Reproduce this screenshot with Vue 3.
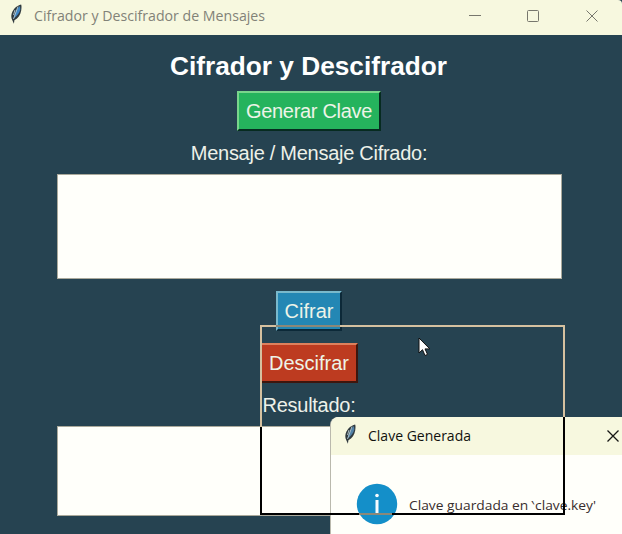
<script setup>
const feather = {
  body: 'M12.6 .6C8.500 1.500 4.800 5 3.200 9.500C2.500 11.700 2.700 14 3.700 16L5.400 19.800L5.900 16.200C9.800 14.400 12 10.500 12.700 6.500C13.100 4 13.200 1.500 12.600 .6Z',
  light: 'M11.500 2C8 4.500 6 9 5.100 14.500C8.800 12 11 8.500 11.800 5.400Z',
}
</script>

<template>
  <div class="desktop">
    <header class="titlebar">
      <svg class="feather" viewBox="0 0 16 21">
        <path :d="feather.body" fill="#303a3e" /><path :d="feather.light" fill="#4087c6" />
        <path d="M9.500 2.500L5 15M6.500 6L5 11" stroke="#b5c7cd" stroke-width=".9" fill="none" />
      </svg>
      <span class="window-title"><svg class="title-text" width="233" height="24"><text x="0" y="17" textLength="231" lengthAdjust="spacingAndGlyphs">Cifrador y Descifrador de Mensajes</text></svg></span>
      <svg class="controls" width="132" height="24" viewBox="0 0 132 24">
        <path d="M1 11.500H13M118.500 6.500L129.500 17.500M129.500 6.500L118.500 17.500" />
        <rect x="59.500" y="6.500" width="11" height="11" rx="1" />
      </svg>
    </header>
    <main class="content">
      <h1><svg width="278" height="34"><text x="0" y="26" textLength="277" lengthAdjust="spacingAndGlyphs">Cifrador y Descifrador</text></svg></h1>
      <button class="generate">Generar Clave</button>
      <label class="message-label">Mensaje / Mensaje Cifrado:</label>
      <div class="field input"></div>
      <button class="encrypt">Cifrar</button>
      <button class="decrypt">Descifrar</button>
      <label class="result-label">Resultado:</label>
      <div class="field result"></div>
    </main>

    <section class="dialog">
      <header class="dialog-bar">
        <svg class="feather" viewBox="0 0 16 21">
          <path :d="feather.body" fill="#303a3e" /><path :d="feather.light" fill="#5282a8" />
          <path d="M9.500 2.500L5 15M6.500 6L5 11" stroke="#b5c7cd" stroke-width=".9" fill="none" />
        </svg>
        <svg class="dialog-title" width="106" height="24"><text x="0" y="17" textLength="103" lengthAdjust="spacingAndGlyphs">Clave Generada</text></svg>
        <svg class="dialog-close" width="14" height="14"><path d="M1.500 1.500L12.500 12.500M12.500 1.500L1.500 12.500" /></svg>
      </header>
      <div class="dialog-body">
        <svg class="info" width="42" height="42">
          <circle cx="21" cy="21" r="20.200" fill="#148fc9" />
          <circle cx="21" cy="12.500" r="1.800" fill="#f7fcff" />
          <rect x="19.500" y="17" width="3" height="14.500" fill="#f7fcff" />
        </svg>
        <svg class="dialog-message" width="190" height="24"><text x="0" y="17" textLength="187" lengthAdjust="spacingAndGlyphs">Clave guardada en ‵clave.key'</text></svg>
      </div>
    </section>

    <!-- Inverting outline shown while the dialog is dragged -->
    <svg class="drag-frame" width="305" height="190" viewBox="0 0 305 190">
      <path d="M1 102V1H304V92" stroke="#d5c1a0" />
      <path d="M1 102V189H304V92" stroke="#000" />
      <path d="M16 1H80M99 189H132" stroke="#8c8878" />
    </svg>
    <svg class="pointer" width="13" height="20" viewBox="0 0 13 20">
      <path d="M1 1V16L4.500 12.700L7 18.500L9.500 17.400L7 11.900H11.800Z" />
    </svg>
  </div>
</template>

<style>
body { margin: 0; overflow: hidden; }
</style>

<style scoped>
* { box-sizing: border-box; }
.desktop {
  width: 622px; height: 534px; position: relative; overflow: hidden;
  background: #264351; font-family: "Liberation Sans", Arial, sans-serif;
}
svg { display: block; flex: none; overflow: visible; }
.titlebar {
  height: 35px; display: flex; align-items: flex-start; padding: 4px 22px 0 8px;
  background: #f7f8df; border-top-right-radius: 4px;
}
.feather { width: 17px; height: 21px; }
.window-title { margin-left: 9px; }
.title-text, .dialog-title, .dialog-message { font-family: "Open Sans", "Noto Sans", sans-serif; }
.title-text { fill: #828278; font-size: 14.500px; }
.controls { margin-left: auto; fill: none; stroke: #77776d; stroke-width: 1; }
.content { display: flex; flex-direction: column; align-items: center; width: 618px; height: 499px; color: #edf1e9; }
h1 { margin: 14px 0 0; height: 34px; font-size: 26px; }
h1 svg { fill: #fff; font-weight: 700; }
button {
  display: flex; align-items: center; justify-content: center; padding: 0;
  height: 40px; border: 2px solid; font: 20px "Liberation Sans", Arial, sans-serif; color: #edf4e8; flex: none;
}
.generate { margin-top: 8px; width: 144px; letter-spacing: -.3px; background: #25b35d; border-color: #79d58c #062b20 #062b20 #79d58c; }
label { font-size: 20px; line-height: 24px; white-space: nowrap; letter-spacing: -.27px; }
.message-label { margin-top: 10px; }
.field { width: 505px; background: #fffffa; border: 1px solid #aaa99b; flex: none; }
.input { height: 105px; margin-top: 9px; }
.encrypt { margin-top: 12px; width: 66px; background: #2487b4; border-color: #79b9cc #0c2938 #0c2938 #79b9cc; }
.decrypt { margin-top: 12px; width: 98px; background: #bd3b20; border-color: #de805c #3e160d #3e160d #de805c; }
.result-label { margin-top: 10px; }
.result { height: 90px; margin-top: 9px; }
.dialog { position: absolute; left: 331px; top: 417px; width: 300px; height: 125px; background: #fffffa; border-radius: 8px 0 0; box-shadow: -1px 0 #bab9ad; overflow: hidden; }
.dialog-bar { height: 38px; display: flex; padding: 7px 0 0 11px; background: #f7f8df; }
.dialog-title { margin-left: 9px; font-size: 14.500px; fill: #11110e; }
.dialog-close { margin: 5px 0 0 132px; stroke: #171715; stroke-width: 1.300; }
.dialog-body { display: flex; padding: 28px 0 0 25px; }
.dialog-message { margin: 10px 0 0 11px; font-size: 13px; fill: #382d2d; }
.drag-frame { position: absolute; left: 260px; top: 325px; fill: none; stroke-width: 2; }
.pointer { position: absolute; left: 418px; top: 337px; fill: #fff; stroke: #111; stroke-width: 1; }
</style>
